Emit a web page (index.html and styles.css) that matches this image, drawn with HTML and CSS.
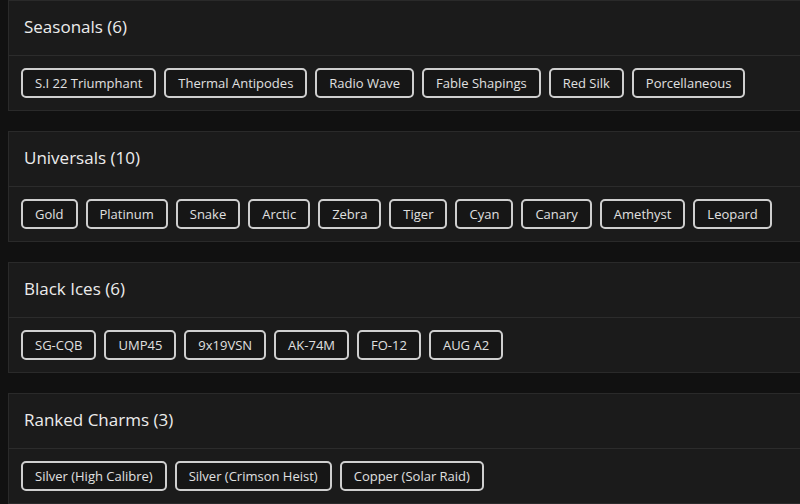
FILE: index.html
```html
<!DOCTYPE html>
<html lang="en">
<head>
    <meta charset="UTF-8">
    <meta name="viewport" content="width=device-width, initial-scale=1.0">
    <title>Collection</title>
    <link rel="stylesheet" href="styles.css">
</head>
<body>
    <div class="card">
        <div class="card-header">Seasonals (6)</div>
        <div class="card-body">
            <span class="tag">S.I 22 Triumphant</span>
            <span class="tag">Thermal Antipodes</span>
            <span class="tag">Radio Wave</span>
            <span class="tag">Fable Shapings</span>
            <span class="tag">Red Silk</span>
            <span class="tag">Porcellaneous</span>
        </div>
    </div>

    <div class="card">
        <div class="card-header">Universals (10)</div>
        <div class="card-body">
            <span class="tag">Gold</span>
            <span class="tag">Platinum</span>
            <span class="tag">Snake</span>
            <span class="tag">Arctic</span>
            <span class="tag">Zebra</span>
            <span class="tag">Tiger</span>
            <span class="tag">Cyan</span>
            <span class="tag">Canary</span>
            <span class="tag">Amethyst</span>
            <span class="tag">Leopard</span>
        </div>
    </div>

    <div class="card">
        <div class="card-header">Black Ices (6)</div>
        <div class="card-body">
            <span class="tag">SG-CQB</span>
            <span class="tag">UMP45</span>
            <span class="tag">9x19VSN</span>
            <span class="tag">AK-74M</span>
            <span class="tag">FO-12</span>
            <span class="tag">AUG A2</span>
        </div>
    </div>

    <div class="card">
        <div class="card-header">Ranked Charms (3)</div>
        <div class="card-body">
            <span class="tag">Silver (High Calibre)</span>
            <span class="tag">Silver (Crimson Heist)</span>
            <span class="tag">Copper (Solar Raid)</span>
        </div>
    </div>
</body>
</html>
```

FILE: styles.css
```css
body {
    font-family: "Open Sans", "Liberation Sans", sans-serif;
    background-color: #111111;
    margin: 0;
    padding: 0 0 0 8px;
    overflow: hidden;
}

.card {
    background: #1b1b1b;
    border: 1px solid #2a2a2a;
    margin-right: -20px;
    margin-bottom: 20px;
}

.card-header {
    height: 51px;
    display: flex;
    align-items: center;
    padding-left: 15px;
    padding-bottom: 3px;
    border-bottom: 1px solid #2c2c2c;
    color: #ececec;
    font-size: 17px;
    font-weight: 500;
}

.card-body {
    display: flex;
    flex-wrap: wrap;
    gap: 8px;
    padding: 12px 12px;
}

.tag {
    height: 30px;
    box-sizing: border-box;
    display: inline-flex;
    align-items: center;
    padding: 0 12px;
    border: 2px solid #cfcfcf;
    border-radius: 5px;
    background: #161616;
    color: #e0e0e0;
    font-size: 13px;
}
```
